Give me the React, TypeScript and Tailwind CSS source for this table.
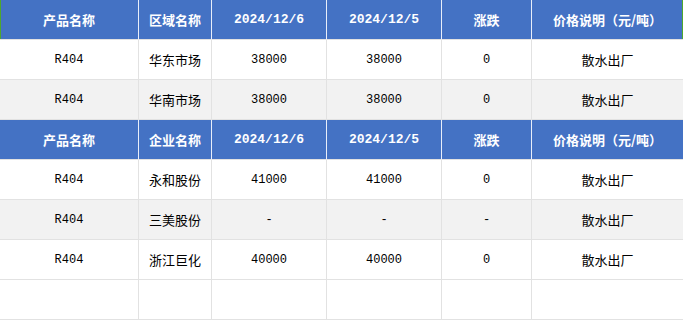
const cols = "grid grid-cols-[139px_73px_115px_115px_90px_151px]";

type Row = { cells: string[]; bg: string; head?: boolean };

const rows: Row[] = [
  {
    head: true,
    bg: "bg-[#4472c4]",
    cells: ["产品名称", "区域名称", "2024/12/6", "2024/12/5", "涨跌", "价格说明（元/吨）"],
  },
  { bg: "bg-white", cells: ["R404", "华东市场", "38000", "38000", "0", "散水出厂"] },
  { bg: "bg-[#f2f2f2]", cells: ["R404", "华南市场", "38000", "38000", "0", "散水出厂"] },
  {
    head: true,
    bg: "bg-[#4472c4]",
    cells: ["产品名称", "企业名称", "2024/12/6", "2024/12/5", "涨跌", "价格说明（元/吨）"],
  },
  { bg: "bg-white", cells: ["R404", "永和股份", "41000", "41000", "0", "散水出厂"] },
  { bg: "bg-[#f2f2f2]", cells: ["R404", "三美股份", "-", "-", "-", "散水出厂"] },
  { bg: "bg-white", cells: ["R404", "浙江巨化", "40000", "40000", "0", "散水出厂"] },
  { bg: "bg-white", cells: ["", "", "", "", "", ""] },
];

const isLatin = (s: string) => /^[A-Za-z0-9/\-]+$/.test(s);

export default function App() {
  return (
    <div className="w-[683px] h-[321px] bg-white overflow-hidden">
      {rows.map((row, i) => (
        <div
          key={i}
          className={`${cols} h-10 ${row.bg} ${
            i === 0 ? "shadow-[inset_1px_0_0_#4ea72e,inset_-1px_0_0_#4ea72e]" : ""
          }`}
        >
          {row.cells.map((c, j) => (
            <div
              key={j}
              className={`flex items-center justify-center border-b border-[#e2e2e2] ${
                j < 5 ? "border-r" : ""
              } ${row.head ? "text-white font-bold border-r-[#e8eefa]" : "text-black"}`}
            >
              <span
                className={
                  isLatin(c)
                    ? `${row.head ? "text-[13px]" : "text-[12px]"} font-['Liberation_Mono','Noto_Sans_CJK_SC',monospace]`
                    : "text-[13px] font-['Noto_Sans_CJK_SC',sans-serif]"
                }
              >
                {c}
              </span>
            </div>
          ))}
        </div>
      ))}
    </div>
  );
}
